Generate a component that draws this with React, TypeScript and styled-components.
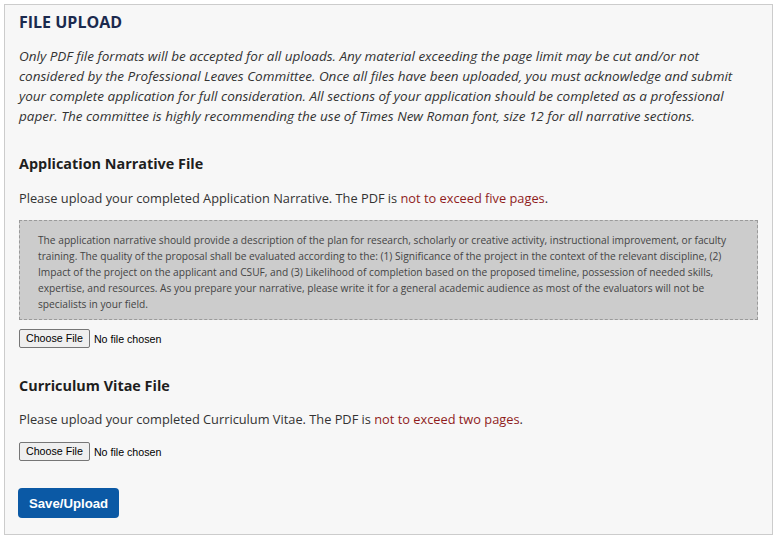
import React from "react";
import styled, { createGlobalStyle } from "styled-components";

const GlobalStyle = createGlobalStyle`
  html, body { margin: 0; padding: 0; background: #ffffff; }
  body { font-family: "Open Sans", "Noto Sans", Arial, sans-serif; color: #333333; }
  * { box-sizing: border-box; }
`;

const Page = styled.div`
  padding: 4px;
  width: 776px;
`;

const Panel = styled.section`
  width: 769px;
  border: 1px solid #cccccc;
  background: #f7f7f7;
  padding: 5px 14px 16px 14px;
`;

const Title = styled.h2`
  margin: 0;
  font-size: 16px;
  line-height: 24px;
  font-weight: 700;
  color: #1b2a4e;
`;

const Intro = styled.p`
  margin: 12px 0 0 0;
  font-size: 13.5px;
  line-height: 20px;
  font-style: italic;
  color: #333333;
  white-space: nowrap;
`;

const SectionTitle = styled.h3`
  margin: 28px 0 0 0;
  font-size: 14.4px;
  line-height: 20px;
  font-weight: 700;
  color: #1e1e1e;
`;

const Instruction = styled.p<{ $gap: number }>`
  margin: ${(p) => p.$gap}px 0 0 0;
  font-size: 12.8px;
  line-height: 20px;
  color: #333333;
`;

const Limit = styled.span`
  color: #8f1c1c;
`;

const Note = styled.div`
  margin: 12px 0 0 0;
  width: 739px;
  background: #cccccc;
  border: 1px dashed #9a9a9a;
  padding: 11px 18px 7px 18px;
  font-size: 10.2px;
  line-height: 16px;
  color: #444444;
  white-space: nowrap;
`;

const FileRow = styled.div<{ $gap: number }>`
  margin-top: ${(p) => p.$gap}px;
  height: 20px;
  display: flex;
  align-items: center;
`;

const FileInput = styled.input`
  font-family: Arial, "Liberation Sans", sans-serif;
  font-size: 10.67px;
  color: #000000;
  margin: 0;
  &::file-selector-button {
    font-family: Arial, "Liberation Sans", sans-serif;
    font-size: 10.67px;
    color: #000000;
    background: #efefef;
    border: 1px solid #767676;
    border-radius: 2px;
    padding: 0 6px;
    height: 19px;
    margin-right: 4px;
  }
`;

const SaveButton = styled.button`
  margin-top: 27px;
  margin-left: -1px;
  display: block;
  height: 30px;
  padding: 0;
  width: 101px;
  border: none;
  border-radius: 4px;
  background: #0b59a5;
  color: #ffffff;
  font-family: Arial, "Liberation Sans", sans-serif;
  font-size: 13.2px;
  font-weight: 700;
  cursor: pointer;
`;

export default function App() {
  return (
    <>
      <GlobalStyle />
      <Page>
        <Panel>
          <Title>FILE UPLOAD</Title>
          <Intro>
            Only PDF file formats will be accepted for all uploads. Any material exceeding the page limit may be cut and/or not
            <br />
            considered by the Professional Leaves Committee. Once all files have been uploaded, you must acknowledge and submit
            <br />
            your complete application for full consideration. All sections of your application should be completed as a professional
            <br />
            paper. The committee is highly recommending the use of Times New Roman font, size 12 for all narrative sections.
          </Intro>

          <SectionTitle>Application Narrative File</SectionTitle>
          <Instruction $gap={14}>
            Please upload your completed Application Narrative. The PDF is <Limit>not to exceed five pages</Limit>.
          </Instruction>
          <Note>
            The application narrative should provide a description of the plan for research, scholarly or creative activity, instructional improvement, or faculty
            <br />
            training. The quality of the proposal shall be evaluated according to the: (1) Significance of the project in the context of the relevant discipline, (2)
            <br />
            Impact of the project on the applicant and CSUF, and (3) Likelihood of completion based on the proposed timeline, possession of needed skills,
            <br />
            expertise, and resources. As you prepare your narrative, please write it for a general academic audience as most of the evaluators will not be
            <br />
            specialists in your field.
          </Note>
          <FileRow $gap={8}>
            <FileInput type="file" accept="application/pdf" />
          </FileRow>

          <SectionTitle>Curriculum Vitae File</SectionTitle>
          <Instruction $gap={13}>
            Please upload your completed Curriculum Vitae. The PDF is <Limit>not to exceed two pages</Limit>.
          </Instruction>
          <FileRow $gap={12}>
            <FileInput type="file" accept="application/pdf" />
          </FileRow>

          <SaveButton type="button">Save/Upload</SaveButton>
        </Panel>
      </Page>
    </>
  );
}
